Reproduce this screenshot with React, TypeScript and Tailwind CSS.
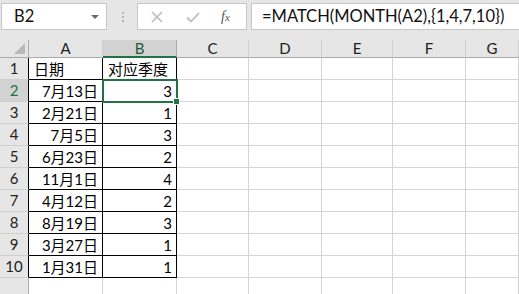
import clsx from "clsx";

const colNames = ["A", "B", "C", "D", "E", "F", "G"];
const colWidths = ["w-[74px]", "w-[74px]", "w-[72px]", "w-[73px]", "w-[71px]", "w-[73px]", "flex-1"];

const colA = ["日期", "7月13日", "2月21日", "7月5日", "6月23日", "11月1日", "4月12日", "8月19日", "3月27日", "1月31日"];
const colB = ["对应季度", "3", "1", "3", "2", "4", "2", "3", "1", "1"];

const cellFont = { fontFamily: "Lato, 'Noto Sans CJK SC', sans-serif" };

const FormulaBar = () => (
  <div className="flex h-[40px] shrink-0 items-start bg-[#e6e6e6] pt-[3px]">
    {/* name box */}
    <div className="ml-[1px] flex h-[27px] w-[106px] items-center justify-between border border-[#c6c6c6] bg-white pl-[12px] pr-[7px]">
      <span className="text-[16.5px] text-[#111]" style={cellFont}>
        B2
      </span>
      <span className="mt-[1px] h-0 w-0 border-x-[4px] border-t-[4px] border-x-transparent border-t-[#6b6b6b]" />
    </div>
    {/* grip dots */}
    <div className="ml-[15px] mt-[9px] flex w-[2px] flex-col gap-[2px]">
      <span className="h-[2px] w-[2px] bg-[#b5b5b5]" />
      <span className="h-[2px] w-[2px] bg-[#b5b5b5]" />
      <span className="h-[2px] w-[2px] bg-[#b5b5b5]" />
    </div>
    {/* cancel / enter / fx */}
    <div className="ml-[13px] flex h-[27px] w-[110px] items-center border border-[#c6c6c6] bg-white pl-[12px]">
      <svg width="12" height="12" viewBox="0 0 12 12" className="ml-[1px]">
        <path d="M1 1 L11 11 M11 1 L1 11" stroke="#bdbdbd" strokeWidth="1.6" fill="none" />
      </svg>
      <svg width="14" height="12" viewBox="0 0 14 12" className="ml-[23px]">
        <path d="M1 6.5 L5 10.5 L13 2" stroke="#bdbdbd" strokeWidth="1.8" fill="none" />
      </svg>
      <span
        className="ml-[21px] text-[14px] italic text-[#555]"
        style={{ fontFamily: "'Liberation Serif', serif" }}
      >
        f<span className="text-[11px]">x</span>
      </span>
    </div>
    {/* formula */}
    <div className="ml-[4px] flex h-[27px] flex-1 items-center border-y border-l border-[#c6c6c6] bg-white pl-[10px]">
      <span className="whitespace-nowrap text-[16.5px] text-[#111]" style={cellFont}>
        =MATCH(MONTH(A2),{"{"}1,4,7,10{"}"})
      </span>
    </div>
  </div>
);

const HeaderRow = () => (
  <div className="flex h-[18px] shrink-0">
    <div className="relative w-[29px] border-b border-r border-[#ababab] bg-[#e6e6e6]">
      <span className="absolute bottom-[3px] right-[3px] h-0 w-0 border-b-[11px] border-l-[11px] border-b-[#b8b8b8] border-l-transparent" />
    </div>
    {colNames.map((c, i) => (
      <div
        key={c}
        className={clsx(
          "flex items-center justify-center text-[15px] leading-none",
          colWidths[i],
          c === "B"
            ? "border-b-2 border-r border-b-[#217346] border-r-[#ababab] bg-[#d2d2d2] text-[#1e5a3a]"
            : "border-b border-r border-b-[#ababab] border-r-[#d0d0d0] bg-[#e6e6e6] text-[#222]"
        )}
        style={cellFont}
      >
        {c}
      </div>
    ))}
  </div>
);

const DataRow = ({ n }: { n: number }) => {
  const inTable = n <= 10;
  const selected = n === 2;
  return (
    <div className="flex h-[22px] shrink-0">
      <div
        className={clsx(
          "flex w-[29px] items-center justify-center border-b border-r text-[15px]",
          selected ? "bg-[#d2d2d2] text-[#217346]" : "bg-[#e6e6e6] text-[#222]",
          inTable ? "border-b-[#d0d0d0] border-r-black" : "border-b-[#d0d0d0] border-r-[#ababab]"
        )}
        style={cellFont}
      >
        {n <= 10 ? n : ""}
      </div>
      {colNames.map((c, i) => {
        const boxed = inTable && (c === "A" || c === "B");
        let text = "";
        if (inTable && c === "A") text = colA[n - 1];
        if (inTable && c === "B") text = colB[n - 1];
        return (
          <div
            key={c}
            className={clsx(
              "relative flex items-center border-b border-r bg-white px-[4px] pt-[1px] text-[15px] text-black",
              colWidths[i],
              boxed ? "border-black" : "border-[#d4d4d4]",
              n === 1 ? "justify-start pl-[5px]" : "justify-end"
            )}
            style={cellFont}
          >
            <span className="whitespace-nowrap">{text}</span>
            {selected && c === "B" && (
              <>
                <span className="pointer-events-none absolute -bottom-[2px] -left-[1px] -right-[2px] -top-[1px] z-10 border-2 border-[#217346]" />
                <span className="absolute -bottom-[4px] -right-[4px] z-20 h-[7px] w-[7px] border border-white bg-[#217346]" />
              </>
            )}
          </div>
        );
      })}
    </div>
  );
};

export default function App() {
  const rows = Array.from({ length: 11 }, (_, i) => i + 1);
  return (
    <div className="flex h-[294px] w-[519px] flex-col overflow-hidden bg-white">
      <FormulaBar />
      <HeaderRow />
      {rows.map((n) => (
        <DataRow key={n} n={n} />
      ))}
    </div>
  );
}
